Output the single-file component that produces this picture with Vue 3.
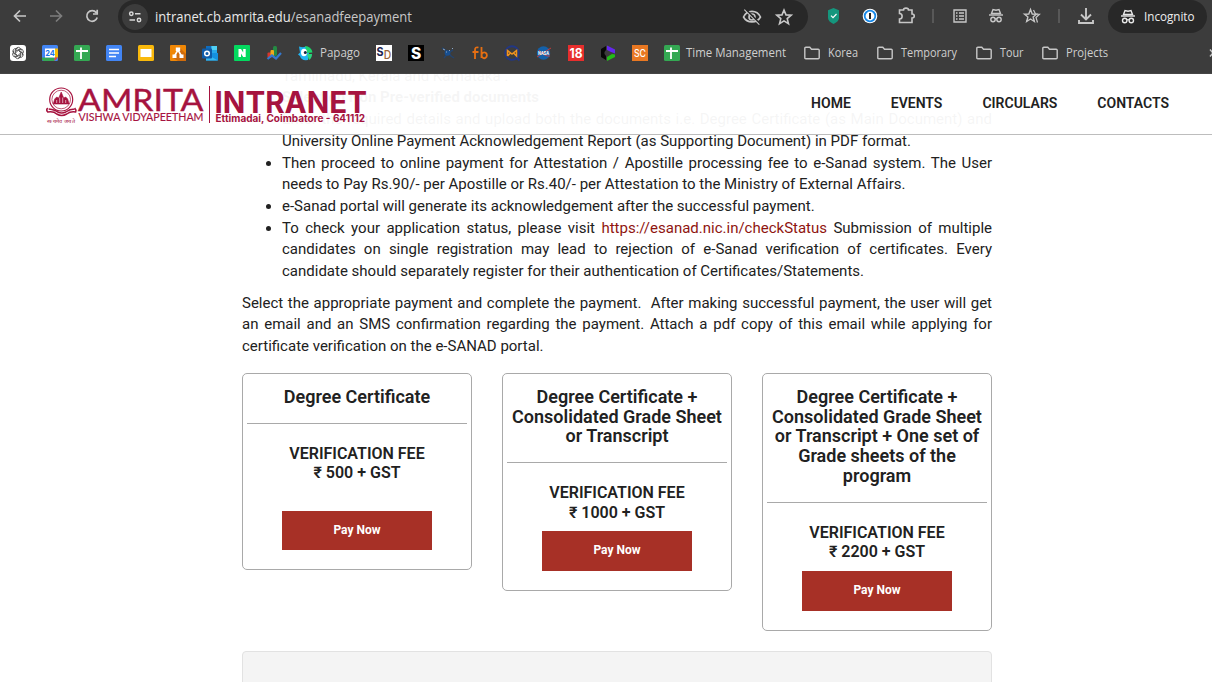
<script setup>
const marks = [
  { icon: 'knot' }, { icon: 'cal' }, { icon: 'sheet' }, { icon: 'doc' }, { icon: 'slides' },
  { icon: 'draw' }, { icon: 'outlook' }, { icon: 'naver' }, { icon: 'chart' },
  { icon: 'papago', label: 'Papago', text: 40, slot: 40 },
  { icon: 'sd' }, { icon: 's' }, { icon: 'sat' }, { icon: 'fb' }, { icon: 'mail' },
  { icon: 'nasa' }, { icon: 'eighteen' }, { icon: 'ring' }, { icon: 'sc' },
  { icon: 'sheet', label: 'Time Management', text: 100, slot: 102 },
  { icon: 'folder', label: 'Korea', text: 30, slot: 35 },
  { icon: 'folder', label: 'Temporary', text: 56, slot: 61 },
  { icon: 'folder', label: 'Tour', text: 23.5, slot: 28 },
  { icon: 'folder', label: 'Projects', text: 42, slot: 42 },
]
const nav = ['HOME', 'EVENTS', 'CIRCULARS', 'CONTACTS']
const plans = [
  { title: 'Degree Certificate', fee: '₹ 500 + GST', spaced: true },
  { title: 'Degree Certificate + Consolidated Grade Sheet or Transcript', fee: '₹ 1000 + GST' },
  { title: 'Degree Certificate + Consolidated Grade Sheet or Transcript + One set of Grade sheets of the program', fee: '₹ 2200 + GST' },
]
</script>

<template>
  <div class="window">
    <div class="chrome">
      <div class="toolbar">
        <svg class="tools-left" width="112" height="33" viewBox="0 0 112 33" fill="none" stroke="#c7c7c7" stroke-width="1.7">
          <path d="M26 16H15M20 10.5L14.5 16L20 21.5" />
          <path d="M50 16H61M56 10.5L61.500 16L56 21.500" stroke="#7d7d7d" />
          <path d="M96.300 12.700A5.300 5.300 0 1 0 97.200 17.500M97.200 9.800V14H93" />
        </svg>
        <div class="address">
          <svg class="site" width="26" height="26" viewBox="0 0 26 26" fill="none" stroke="#d8d8d8" stroke-width="1.500">
            <circle cx="13" cy="13" r="13" fill="#3c3c3c" stroke="none" />
            <circle cx="9.300" cy="9.800" r="1.700" /><path d="M13 9.800H18.500M7.500 16H13" /><circle cx="17" cy="16" r="1.700" />
          </svg>
          <svg class="url" width="260" height="24"><text x="0" y="16.500" textLength="257" lengthAdjust="spacingAndGlyphs" fill="#e8e8e8">intranet.cb.amrita.edu<tspan fill="#c7c7c7">/esanadfeepayment</tspan></text></svg>
          <svg class="address-icons" width="56" height="24" viewBox="0 0 56 24" fill="none" stroke="#c7c7c7" stroke-width="1.600">
            <path d="M2.500 12C6 4.500 16 4.500 19.500 12C16 18.500 6 18.500 2.500 12Z" /><circle cx="11" cy="12" r="3" /><path d="M3.500 4.500L18.500 19.500" /><path d="M4.500 4L19.500 19" stroke="#282828" />
            <path d="M43 5L45 9.900L50.200 10.200L46.200 13.600L47.500 18.700L43 15.900L38.500 18.700L39.800 13.600L35.800 10.200L41 9.900Z" />
          </svg>
        </div>
        <svg class="extensions" width="296" height="33" viewBox="812 0 296 33" fill="none" stroke="#c7c7c7" stroke-width="1.600">
          <path d="M833.500 8L839 10.300V18C839 20.500 836.500 22.500 833.500 24C830.500 22.500 828 20.500 828 18V10.300Z" fill="#15967d" stroke="none" /><path d="M831 15.700L833 17.700L836.500 14" stroke="#fff" stroke-width="1.200" />
          <circle cx="870" cy="16" r="7.300" fill="#fff" stroke="none" /><circle cx="870" cy="16" r="5.300" stroke="#1688e8" stroke-width="1.800" /><path d="M870 13V19" stroke="#222" stroke-width="2" />
          <path d="M899.500 10H903.500C903.500 7.500 908.500 7.500 908.500 10H912V14C915 14 915 18 912 18V22.500H899.500V19C903 19 903 13.500 899.500 13.500Z" />
          <path d="M933 9V23M1059 9V23" stroke="#606060" />
          <path d="M954 10H966V22H954ZM959 13H964M959 16H964M959 19H964M956 13H957.500M956 16H957.500M956 19H957.500" stroke-width="1.400" />
          <g stroke-width="1.400"><path d="M989 15H1003" /><path d="M991.500 13.500L993 9.500L996 10.300L999 9.500L1000.500 13.500Z" /><circle cx="993" cy="19.500" r="2.200" /><circle cx="999" cy="19.500" r="2.200" /><path d="M995 19Q996 18.300 997 19" /></g>
          <path d="M1030.500 9.500L1032.200 14L1036.500 14.200L1033.100 17L1034.300 21.500L1030.500 19L1026.700 21.500L1027.900 17L1024.500 14.200L1028.800 14Z" stroke-width="1.400" /><path d="M1033.500 10L1035.500 14L1039.500 14.300L1036 17.500L1037.500 22.500" stroke-width="1.200" />
          <path d="M1086 8V19M1081 14.500L1086 19.500L1091 14.500M1079 20V23H1093V20" stroke-width="1.900" />
        </svg>
        <div class="incognito">
          <svg width="16" height="18" viewBox="0 0 16 18" fill="none" stroke="#e8e8e8" stroke-width="1.400"><path d="M1 8H15" /><path d="M3.500 6.500L5 2.500L8 3.300L11 2.500L12.500 6.500Z" /><circle cx="4.700" cy="12.500" r="2.200" /><circle cx="11.300" cy="12.500" r="2.200" /><path d="M7 12Q8 11.300 9 12" /></svg>
          <svg class="inc-text" width="54" height="20"><text x="0" y="13.500" textLength="50.500" lengthAdjust="spacingAndGlyphs" fill="#eee">Incognito</text></svg>
        </div>
      </div>
      <div class="bookmarks">
        <div v-for="(m, i) in marks" :key="i" class="mark">
          <svg width="16" height="16" viewBox="0 0 16 16" fill="none">
            <g v-if="m.icon === 'knot'"><rect width="16" height="16" rx="3" fill="#fff" /><g stroke="#444" stroke-width=".8"><path v-for="a in 6" :key="a" :transform="`rotate(${a * 60} 8 8)`" d="M6 8V4.200Q6.300 2.300 8.300 2.300Q10.300 2.500 10.700 4.200M6 6L9 4.300Q10.800 3.500 12 5.300" /></g></g>
            <g v-else-if="m.icon === 'cal'"><rect width="16" height="16" rx="1.500" fill="#4285f4" /><path d="M12.500 3.500H16V12.500H12.500Z" fill="#fbbc04" /><path d="M0 12.500H12.500V16H1.500L0 14.500Z" fill="#34a853" /><path d="M12.500 12.500H16L12.500 16Z" fill="#ea4335" /><rect x="3" y="3.500" width="10" height="9" fill="#fff" /><text x="8" y="10.800" text-anchor="middle" class="glyph" font-size="7.500" fill="#1a73e8">24</text></g>
            <g v-else-if="m.icon === 'sheet'"><rect width="16" height="16" rx="1.500" fill="#34a853" /><path d="M2 6H14M7 2.500V14" stroke="#fff" stroke-width="1.800" /></g>
            <g v-else-if="m.icon === 'doc'"><rect width="16" height="16" rx="1.500" fill="#4285f4" /><path d="M3 4.500H13M3 8H13M3 11.500H10" stroke="#fff" stroke-width="1.700" /></g>
            <g v-else-if="m.icon === 'slides'"><rect width="16" height="16" rx="1.500" fill="#f9b90c" /><rect x="2.500" y="4" width="11" height="8" fill="#fff" /></g>
            <g v-else-if="m.icon === 'draw'"><rect width="16" height="16" rx="1" fill="#f08705" /><path d="M10 3L16 9V16H8L3 13Z" fill="#cf6b0b" /><path d="M8 5L4.500 11M8 5L11.500 11" stroke="#fff" stroke-width="1.500" /><path d="M5.800 2.500H10.200V6H5.800ZM2.500 9.500H6.500V13H2.500ZM9.500 9.500H13.500V13H9.500Z" fill="#fff" /></g>
            <g v-else-if="m.icon === 'outlook'"><path d="M4 1H15V11H4Z" fill="#28a8ea" /><path d="M4 1H9.500V6H4Z" fill="#0f6cbd" /><path d="M9.500 1H15V5H9.500Z" fill="#50d0f5" /><path d="M4 8H16V15.500H4Z" fill="#1490df" /><path d="M4 9L16 15.500H4Z" fill="#35b8f1" /><rect y="3.500" width="10" height="10" rx="1" fill="#0f5ca8" /><circle cx="5" cy="8.500" r="2.300" stroke="#fff" stroke-width="1.500" /></g>
            <g v-else-if="m.icon === 'naver'"><rect width="16" height="16" rx="1" fill="#03d95f" /><path d="M4.500 4H7L9.200 7.500V4H11.700V12H9.200L7 8.500V12H4.500Z" fill="#fff" /></g>
            <g v-else-if="m.icon === 'chart'"><rect x="1.500" y="7.500" width="4" height="5.500" rx="1" fill="#d7372c" /><rect x="7" y="1" width="4" height="10" rx="1.500" fill="#248b43" /><rect x="4.500" y="5" width="3.500" height="6.500" rx="1" fill="#f0a91b" /><path d="M1.500 14L6 10.500L10 13.500L15 8" stroke="#3478cf" stroke-width="2.200" /></g>
            <g v-else-if="m.icon === 'papago'"><path d="M1 1.500Q5 3 8 1.500L11 8L10 15Q3 16 2 11L0 9.500L2 7.500Z" fill="#20b5f3" /><path d="M7 1Q13 1 14.500 7.500L9 8Z" fill="#1cd66a" /><path d="M9 9H14Q14 13 11 15Z" fill="#29d77b" /><ellipse cx="6" cy="7.500" rx="3" ry="3.700" fill="#fff" /><circle cx="7.300" cy="7.500" r="1.500" fill="#132746" /></g>
            <g v-else-if="m.icon === 'sd'"><rect width="16" height="16" fill="#fff" /><text x="0.500" y="11" class="glyph" font-size="12" textLength="7" lengthAdjust="spacingAndGlyphs" fill="#202653">S</text><text x="7.700" y="14" class="glyph light" font-size="11.500" textLength="7.500" lengthAdjust="spacingAndGlyphs" fill="#98643b">D</text></g>
            <g v-else-if="m.icon === 's'"><rect width="16" height="16" fill="#000" /><text x="8" y="13.500" text-anchor="middle" class="glyph heavy" font-size="15.500" fill="#fff">S</text></g>
            <g v-else-if="m.icon === 'sat'"><path d="M2 3L7 6L11 11L14 13M4 13L8 8L13 5" stroke="#24446d" stroke-width="1.500" /><circle cx="7.500" cy="8" r="2.800" fill="#174f91" /><path d="M3 4L5 5M9 6L10 5M6 7L7 7M12 4L13 3" stroke="#91a9c3" /></g>
            <path v-else-if="m.icon === 'fb'" d="M6.500 2.500Q3 1.500 3 5V14M.5 7H6.500M9.500 2V13M9.500 10.200A2.700 2.900 0 1 1 9.500 10.400" stroke="#e66f12" stroke-width="1.800" />
            <g v-else-if="m.icon === 'mail'"><circle cx="8" cy="8" r="6.800" stroke="#223783" stroke-width="1.900" /><path d="M11.500 12L15.500 15.500" stroke="#223783" stroke-width="1.900" /><path d="M3.500 11V5.500L8 9L12.500 5.500V11L9.500 8M3.500 11L6.500 8" stroke="#ef921f" stroke-width="1.500" /></g>
            <g v-else-if="m.icon === 'nasa'"><circle cx="7.500" cy="8" r="6.700" fill="#1460a8" /><path d="M1 12L7 8L15 3M3 5Q9 12 14 11" stroke="#d33a3a" stroke-width=".9" /><text x="7.500" y="10" text-anchor="middle" class="glyph" font-size="5" textLength="11" lengthAdjust="spacingAndGlyphs" fill="#fff">NASA</text></g>
            <g v-else-if="m.icon === 'eighteen'"><rect width="16" height="16" fill="#e72e2d" /><text x="8" y="12.700" text-anchor="middle" class="glyph" font-size="13" textLength="13" lengthAdjust="spacingAndGlyphs" fill="#fff">18</text></g>
            <g v-else-if="m.icon === 'ring'"><path d="M6 1V5L4.500 7V9L6 11V15L1 12V4Z" fill="#080808" /><path d="M7 .5L15 4.500V8.500L11 7L7 5Z" fill="#6427ef" /><path d="M15 9.500V12L7 16V12L12 9Z" fill="#22bd18" /></g>
            <g v-else-if="m.icon === 'sc'"><rect width="16" height="16" fill="#e97822" /><text x="8" y="12" text-anchor="middle" class="glyph light" font-size="10.500" textLength="12" lengthAdjust="spacingAndGlyphs" fill="#fff">SC</text></g>
            <path v-else d="M.8 3.300Q.8 2.300 1.800 2.300H5.800L7.500 4.200H14.200Q15.200 4.200 15.200 5.200V12.700Q15.200 13.700 14.200 13.700H1.800Q.8 13.700 .8 12.700Z" stroke="#c7c7c7" stroke-width="1.400" />
          </svg>
          <svg v-if="m.label" class="mark-label" :class="{ wide: m.icon === 'folder' }" :width="m.slot" height="20"><text x="0" y="14" :textLength="m.text" lengthAdjust="spacingAndGlyphs" fill="#cfcfcf">{{ m.label }}</text></svg>
        </div>
        <svg class="more" width="2" height="12" viewBox="0 0 2 12" fill="none" stroke="#c7c7c7" stroke-width="1.500"><path d="M0 2.500L3 6L0 9.500" /></svg>
      </div>
    </div>

    <div class="page">
      <header>
        <svg class="logo" width="322" height="44" viewBox="0 0 322 44" fill="#a6133f">
          <g fill="none" stroke="#a6133f" transform="translate(-.3 2)">
            <circle cx="15.500" cy="15.500" r="11.500" stroke-width="1.200" /><circle cx="15.500" cy="15.500" r="9.300" stroke-width=".7" />
            <path d="M7.500 20L9 15L11 13L13 14L15.500 8L18 14L20 13L22 15L23.500 20Z" fill="#a6133f" stroke-width=".6" />
            <path d="M11 16V19M14 13.500V19M17 13.500V19M20 16V19" stroke="#fff" stroke-width=".6" />
            <path d="M2 24Q0 26 2 28Q8 27 11 30Q16 33 21 30Q25 27 30 28Q31 26 29 24M3 25Q10 26 12 28Q16 30 20 28Q24 25 29 25" stroke-width="1.500" />
          </g>
          <text x="1" y="40.500" class="motto" textLength="28" lengthAdjust="spacingAndGlyphs">सत्यमेव जयते</text>
          <text x="32" y="29.200" class="amrita" textLength="125.500" lengthAdjust="spacingAndGlyphs">AMRITA</text>
          <text x="32.500" y="39" class="vishwa" textLength="125" lengthAdjust="spacingAndGlyphs">VISHWA VIDYAPEETHAM</text>
          <rect x="163" y="4" width="1" height="37" />
          <text x="168.500" y="30.500" class="intra" textLength="152.500" lengthAdjust="spacingAndGlyphs">INTRANET</text>
          <text x="169.500" y="40" class="place" textLength="149.500" lengthAdjust="spacingAndGlyphs">Ettimadai, Coimbatore - 641112</text>
        </svg>
        <nav><a v-for="n in nav" :key="n">{{ n }}</a></nav>
      </header>

      <main>
        <div class="steps">
          <div class="line">Tamilnadu, Kerala and Karnataka .</div>
          <div class="line strong">Selection Non Pre-verified documents</div>
          <ul>
            <li>Enter the required details and upload both the documents i.e. Degree Certificate (as Main Document) and University Online Payment Acknowledgement Report (as Supporting Document) in PDF format.</li>
            <li>Then proceed to online payment for Attestation / Apostille processing fee to e-Sanad system. The User needs to Pay Rs.90/- per Apostille or Rs.40/- per Attestation to the Ministry of External Affairs.</li>
            <li>e-Sanad portal will generate its acknowledgement after the successful payment.</li>
            <li>To check your application status, please visit <a>https://esanad.nic.in/checkStatus</a> Submission of multiple candidates on single registration may lead to rejection of e-Sanad verification of certificates. Every candidate should separately register for their authentication of Certificates/Statements.</li>
          </ul>
        </div>
        <p>Select the appropriate payment and complete the payment.&nbsp; After making successful payment, the user will get an email and an SMS confirmation regarding the payment. Attach a pdf copy of this email while applying for certificate verification on the e-SANAD portal.</p>
        <div class="plans">
          <section v-for="p in plans" :key="p.fee" class="plan">
            <h4>{{ p.title }}</h4>
            <h5>VERIFICATION FEE<br>{{ p.fee }}</h5>
            <button :class="{ spaced: p.spaced }">Pay Now</button>
          </section>
        </div>
        <div class="panel"></div>
      </main>
    </div>
  </div>
</template>

<style>
body { background: #fff; overflow: hidden; }
</style>
<style scoped>
.window { width: 1212px; height: 682px; overflow: hidden; display: flex; flex-direction: column; font-family: Roboto, "Liberation Sans", sans-serif; color: #212121; }
.window * { box-sizing: border-box; }
svg { display: block; flex: none; overflow: visible; }
.chrome { height: 74px; flex: none; background: #3c3c3c; border-bottom: 1px solid #454545; font-family: "Open Sans", "Noto Sans", sans-serif; }
.toolbar { height: 33px; display: flex; }
.address { margin-left: 6px; width: 690px; height: 33px; background: #282828; border-radius: 17px; display: flex; align-items: center; padding-left: 4px; }
.url { margin-left: 7px; font-size: 14px; }
.address-icons { margin-left: 326px; }
.extensions { margin-left: 4px; }
.incognito { width: 99px; height: 33px; border-radius: 17px; background: #282828; display: flex; align-items: center; padding-left: 12px; }
.inc-text { margin-left: 8px; font-size: 12.5px; }
.bookmarks { height: 40px; display: flex; align-items: center; gap: 16px; padding-left: 10px; }
.mark { display: flex; align-items: center; flex: none; }
.mark-label { margin-left: 6px; font-size: 12px; }
.mark-label.wide { margin-left: 8px; margin-right: -2px; }
.more { margin-left: auto; }
.glyph { font-family: Inter, sans-serif; font-weight: 700; }
.glyph.light { font-weight: 500; }
.glyph.heavy { font-weight: 800; }
.page { position: relative; flex: 1; min-height: 0; overflow: hidden; }
header { position: absolute; inset: 0 0 auto 0; z-index: 2; height: 61px; background: rgba(255,255,255,.955); border-bottom: 1px solid #bdbdbd; display: flex; align-items: center; padding: 0 43px 0 46px; justify-content: space-between; }
.motto { font-size: 5px; }
.amrita { font: 400 31px Lato, sans-serif; stroke: #a6133f; stroke-width: .4px; }
.vishwa { font: 400 11px Lato, sans-serif; stroke: #a6133f; stroke-width: .15px; }
.intra { font: 700 29.500px Inter, sans-serif; }
.place { font: 700 9.700px Inter, sans-serif; }
nav { display: flex; gap: 40px; font-size: 14px; font-weight: 600; margin-top: -2px; }
main { width: 750px; margin-left: 242px; font-size: 15px; line-height: 21.710px; }
.steps { padding-left: 40px; margin-top: -8.300px; }
.strong { font-weight: 700; }
ul { margin: 0; padding: 0; text-align: justify; }
li a { color: #8f1510; }
p { margin: 10px 0 0; text-align: justify; }
.plans { display: flex; gap: 30px; align-items: flex-start; margin-top: 15px; }
.plan { width: 230px; border: 1px solid #a9a9a9; border-radius: 5px; padding: 13px 4px 19px; text-align: center; display: flex; flex-direction: column; align-items: center; }
h4 { margin: 0; width: 100%; padding-bottom: 16px; border-bottom: 1px solid #a9a9a9; font-size: 18px; font-weight: 600; line-height: 19.800px; }
h5 { margin: 20px 0 9px; font-size: 16px; font-weight: 600; line-height: 19.600px; }
button { border: 0; width: 150px; height: 39.600px; background: #a73026; color: #fff; font: 700 12px Roboto, sans-serif; padding: 0 0 2px; }
.spaced { margin-top: 19px; }
.panel { margin-top: 20px; height: 100px; background: #f4f4f4; border: 1px solid #e2e2e2; border-radius: 4px; }
</style>
